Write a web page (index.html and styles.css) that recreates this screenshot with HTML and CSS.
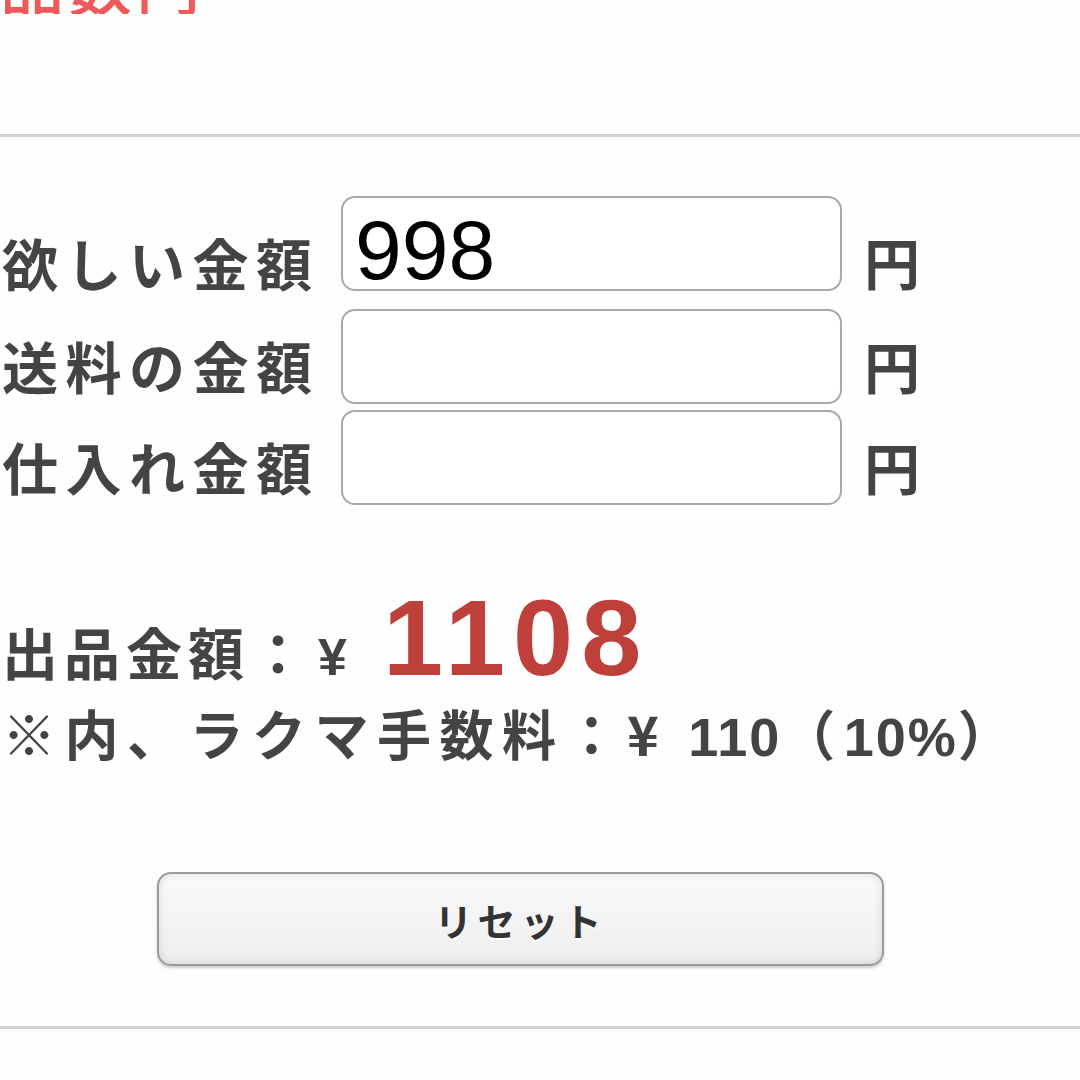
FILE: index.html
```html
<!DOCTYPE html>
<html lang="ja">
<head>
<meta charset="utf-8">
<title>ラクマ手数料計算</title>
<link rel="stylesheet" href="styles.css">
</head>
<body>
<div class="page">
  <div class="title"><span class="title-text">品数円</span></div>
  <div class="rule rule-top"></div>
  <div class="form">
    <div class="row row-1">
      <span class="label">欲しい金額</span>
      <div class="input"><span class="value">998</span></div>
      <span class="unit">円</span>
    </div>
    <div class="row row-2">
      <span class="label">送料の金額</span>
      <div class="input"></div>
      <span class="unit">円</span>
    </div>
    <div class="row row-3">
      <span class="label">仕入れ金額</span>
      <div class="input"></div>
      <span class="unit">円</span>
    </div>
  </div>
  <div class="result">
    <div class="price-line"><span class="price-label">出品金額：</span><span class="yen">¥</span><span class="price">1108</span></div>
    <div class="fee-line">※内、ラクマ手数料：¥ <span class="num">110</span>（<span class="num">10%</span>）</div>
  </div>
  <div class="actions">
    <div class="button">リセット</div>
  </div>
  <div class="rule rule-bottom"></div>
</div>
</body>
</html>
```
FILE: styles.css
```css
html, body {
  margin: 0;
  padding: 0;
  background: #fefefe;
}
.page {
  width: 1080px;
  height: 1080px;
  overflow: hidden;
  font-family: "Noto Sans CJK JP", "Noto Sans", sans-serif;
  color: #444;
}
.title {
  height: 14px;
  overflow: hidden;
  display: flex;
  align-items: flex-end;
}
.title-text {
  font-size: 64px;
  line-height: 1;
  font-weight: 500;
  color: #ee5a5a;
  letter-spacing: 4px;
}
.rule {
  height: 3px;
  background: #d2d2d2;
}
.rule-top {
  margin-top: 120px;
}
.form {
  padding-top: 59px;
}
.row {
  display: flex;
  align-items: flex-end;
}
.row-2 { margin-top: 18px; }
.row-3 { margin-top: 6px; }
.label {
  width: 341px;
  flex: none;
  font-size: 56px;
  font-weight: 700;
  letter-spacing: 7.5px;
  line-height: 1;
  padding-left: 2px;
  box-sizing: border-box;
  margin-bottom: 11px;
}
.row-1 .label { margin-bottom: 1px; }
.input {
  width: 501px;
  height: 95px;
  box-sizing: border-box;
  border: 2.5px solid #aaa;
  border-radius: 14px;
  background: #fff;
  flex: none;
  display: flex;
  align-items: center;
  padding-left: 12px;
}
.value {
  font-family: "Liberation Sans", Arial, sans-serif;
  font-size: 84px;
  color: #000;
  line-height: 1;
  margin-top: 12px;
}
.unit {
  font-size: 56px;
  font-weight: 700;
  line-height: 1;
  margin-left: 22px;
  margin-bottom: 11px;
}
.row-1 .unit { margin-bottom: 2px; }
.result {
  padding-top: 79px;
  padding-left: 2px;
}
.price-line {
  display: flex;
  align-items: baseline;
  line-height: 1;
}
.price-label {
  font-size: 56px;
  font-weight: 700;
  letter-spacing: 6px;
}
.yen {
  font-family: "Liberation Sans", Arial, sans-serif;
  font-size: 52px;
  font-weight: 700;
  margin-left: 6px;
}
.price {
  font-family: "Liberation Sans", Arial, sans-serif;
  font-size: 108px;
  font-weight: 700;
  color: #bf3f3a;
  letter-spacing: 8px;
  margin-left: 36px;
}
.fee-line {
  font-size: 54px;
  font-weight: 700;
  line-height: 1;
  margin-top: 14px;
  letter-spacing: 8.5px;
  white-space: nowrap;
}
.num {
  font-family: "Liberation Sans", Arial, sans-serif;
  font-size: 54px;
  letter-spacing: 2px;
}
.actions {
  padding-top: 108px;
  padding-left: 157px;
}
.button {
  width: 727px;
  height: 94px;
  box-sizing: border-box;
  border: 2px solid #9c9c9c;
  border-radius: 14px;
  background: linear-gradient(#fafafa, #eeeeee);
  box-shadow: inset 0 0 8px rgba(0,0,0,0.12), 0 2px 3px rgba(0,0,0,0.2);
  display: flex;
  align-items: center;
  justify-content: center;
  font-size: 38px;
  font-weight: 700;
  letter-spacing: 5px;
  color: #333;
  text-shadow: 0 2px 0 #fff;
}
.rule-bottom {
  margin-top: 60px;
}
```
